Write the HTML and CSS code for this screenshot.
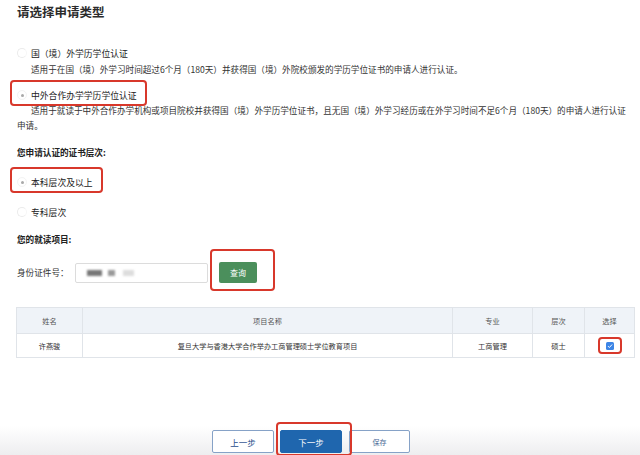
FILE: index.html
```html
<!DOCTYPE html>
<html lang="zh-CN">
<head>
  <meta charset="UTF-8">
  <meta name="viewport" content="width=device-width, initial-scale=1.0">
  <title>请选择申请类型</title>
  <link rel="stylesheet" href="styles.css">
</head>
<body>
  <div class="page">
    <h1 class="page-title">请选择申请类型</h1>

    <!-- 申请类型 -->
    <label class="option option-first">
      <span class="radio"></span>
      <span>国（境）外学历学位认证</span>
    </label>
    <p class="option-desc">适用于在国（境）外学习时间超过6个月（180天）并获得国（境）外院校颁发的学历学位证书的申请人进行认证。</p>

    <label class="option option-next mark">
      <span class="radio checked"></span>
      <span>中外合作办学学历学位认证</span>
    </label>
    <p class="option-desc">适用于就读于中外合作办学机构或项目院校并获得国（境）外学历学位证书，且无国（境）外学习经历或在外学习时间不足6个月（180天）的申请人进行认证申请。</p>

    <!-- 证书层次 -->
    <h3 class="field-title level-title">您申请认证的证书层次:</h3>
    <label class="option level-first mark">
      <span class="radio checked"></span>
      <span>本科层次及以上</span>
    </label>
    <label class="option level-next">
      <span class="radio"></span>
      <span>专科层次</span>
    </label>

    <!-- 就读项目 -->
    <h3 class="field-title project-title">您的就读项目:</h3>
    <div class="search-row">
      <span class="search-label">身份证件号：</span>
      <div class="search-input">
        <span class="masked dark"></span>
        <span class="masked mid"></span>
        <span class="masked light"></span>
      </div>
      <span class="mark-wrap">
        <button class="search-btn">查询</button>
      </span>
    </div>

    <table class="result-table">
      <colgroup>
        <col style="width: 66px">
        <col style="width: 370px">
        <col style="width: 80px">
        <col style="width: 52px">
        <col style="width: 50px">
      </colgroup>
      <thead>
        <tr>
          <th>姓名</th>
          <th>项目名称</th>
          <th>专业</th>
          <th>层次</th>
          <th>选择</th>
        </tr>
      </thead>
      <tbody>
        <tr>
          <td>许燕骏</td>
          <td>复旦大学与香港大学合作举办工商管理硕士学位教育项目</td>
          <td>工商管理</td>
          <td>硕士</td>
          <td>
            <span class="check-wrap">
              <svg class="checkbox" width="8" height="8" viewBox="0 0 8 8">
                <rect width="8" height="8" rx="1.5" fill="#3d85e6"/>
                <path d="M2 4.1 L3.4 5.5 L6.1 2.5" stroke="#fff" stroke-width="1" fill="none"/>
              </svg>
            </span>
          </td>
        </tr>
      </tbody>
    </table>
  </div>

  <footer class="footer">
    <button class="btn">上一步</button>
    <button class="btn btn-primary">下一步</button>
    <button class="btn btn-save">保存</button>
  </footer>
</body>
</html>
```

FILE: styles.css
```css
/* General */
body {
  margin: 0;
  font-family: "Noto Sans CJK SC", "Noto Sans", sans-serif;
  color: #222;
  background: #fff;
}

.page {
  padding: 3px 3px 0 17px;
}

.page-title {
  margin: 0;
  font-size: 12.5px;
  line-height: 18px;
  font-weight: bold;
  color: #2b2b2b;
}

/* Radio options */
.option {
  display: flex;
  align-items: center;
  width: max-content;
  height: 26px;
  box-sizing: border-box;
  border: 2px solid transparent;
  border-radius: 4px;
  padding: 4px 8px 0 5px;
  margin-left: -7px;
  font-size: 8.8px;
  line-height: 15px;
  color: #222;
}

.mark {
  border-color: #d8382b;
}

.option-first { margin-top: 17px; }
.option-next { margin-top: 3px; }
.level-first { margin-top: 7px; }
.level-next { margin-top: 4px; }

.radio {
  position: relative;
  width: 10px;
  height: 10px;
  box-sizing: border-box;
  border: 1px solid #ebebeb;
  border-right-color: #f7f7f7;
  border-radius: 50%;
  margin-right: 4px;
}

.radio.checked {
  border-color: #f3f3f3;
}

.radio.checked::after {
  content: "";
  position: absolute;
  left: 2.5px;
  top: 2.5px;
  width: 3px;
  height: 3px;
  border-radius: 50%;
  background: #a9a9a9;
}

.option-desc {
  margin: -2px 0 0;
  padding-right: 9px;
  text-indent: 14px;
  font-size: 8.6px;
  line-height: 15px;
  color: #333;
}

.option-next + .option-desc {
  margin-top: -3px;
}

/* Field titles */
.field-title {
  margin: 0;
  font-size: 8.6px;
  line-height: 15px;
  font-weight: bold;
  color: #222;
}

.level-title { margin-top: 12px; }
.project-title { margin-top: 9px; }

/* Search row */
.search-row {
  display: flex;
  align-items: flex-start;
  margin-top: 2px;
}

.search-label {
  width: 58px;
  margin-top: 13px;
  font-size: 8.6px;
  line-height: 20px;
  color: #333;
}

.search-input {
  display: flex;
  align-items: center;
  gap: 6px;
  width: 133px;
  height: 20px;
  box-sizing: border-box;
  margin-top: 14px;
  padding-left: 11px;
  border: 1px solid #dcdcdc;
  border-radius: 2px;
}

.masked {
  height: 6px;
  filter: blur(1.2px);
}

.masked.dark { width: 15px; background: #777; }
.masked.mid { width: 7px; background: #999; }
.masked.light { width: 11px; background: #ddd; margin-left: 2px; }

.mark-wrap {
  display: block;
  margin-left: 2px;
  padding: 11px 16px 6px 7px;
  border: 2px solid #d8382b;
  border-radius: 4px;
}

.search-btn {
  display: block;
  width: 38px;
  height: 21px;
  border: none;
  border-radius: 2px;
  background: #4b8f5c;
  color: #fff;
  font-family: inherit;
  font-size: 8px;
  padding: 0;
}

/* Result table */
.result-table {
  margin-top: 16px;
  margin-left: -1px;
  width: 618px;
  table-layout: fixed;
  border-collapse: collapse;
  font-size: 7.2px;
}

.result-table th,
.result-table td {
  border: 1px solid #e0e4e9;
  text-align: center;
  vertical-align: middle;
  padding: 0;
}

.result-table th {
  height: 25px;
  background: #eff3f8;
  font-weight: normal;
  color: #555;
}

.result-table td {
  height: 23px;
  color: #333;
}

.check-wrap {
  display: inline-block;
  padding: 3px 6px 2px 6px;
  border: 2px solid #d8382b;
  border-radius: 4px;
  line-height: 0;
  vertical-align: middle;
}

.checkbox {
  display: block;
}

/* Footer buttons */
.footer {
  display: flex;
  gap: 6px;
  margin-top: 58px;
  height: 40px;
  box-sizing: border-box;
  padding: 14px 0 0 212px;
  background: linear-gradient(to bottom, #fff 0%, #fff 25%, #ededef 100%);
}

.btn {
  width: 62px;
  height: 23px;
  box-sizing: border-box;
  border: 1px solid #86a2c7;
  border-radius: 2px;
  background: #fff;
  color: #1e4c8a;
  font-family: inherit;
  font-size: 8.5px;
  padding: 0;
}

.btn-primary {
  position: relative;
  background: #1f66ae;
  border-color: #1f66ae;
  color: #fff;
}

/* annotation frame drawn over the button */
.btn-primary::after {
  content: "";
  position: absolute;
  left: -5px;
  top: -9px;
  right: -11px;
  bottom: -4px;
  border: 2px solid #d8382b;
  border-radius: 4px;
}

.btn-save {
  width: 61px;
  margin-left: 1px;
  font-size: 7px;
  color: #4a6a96;
}
```
